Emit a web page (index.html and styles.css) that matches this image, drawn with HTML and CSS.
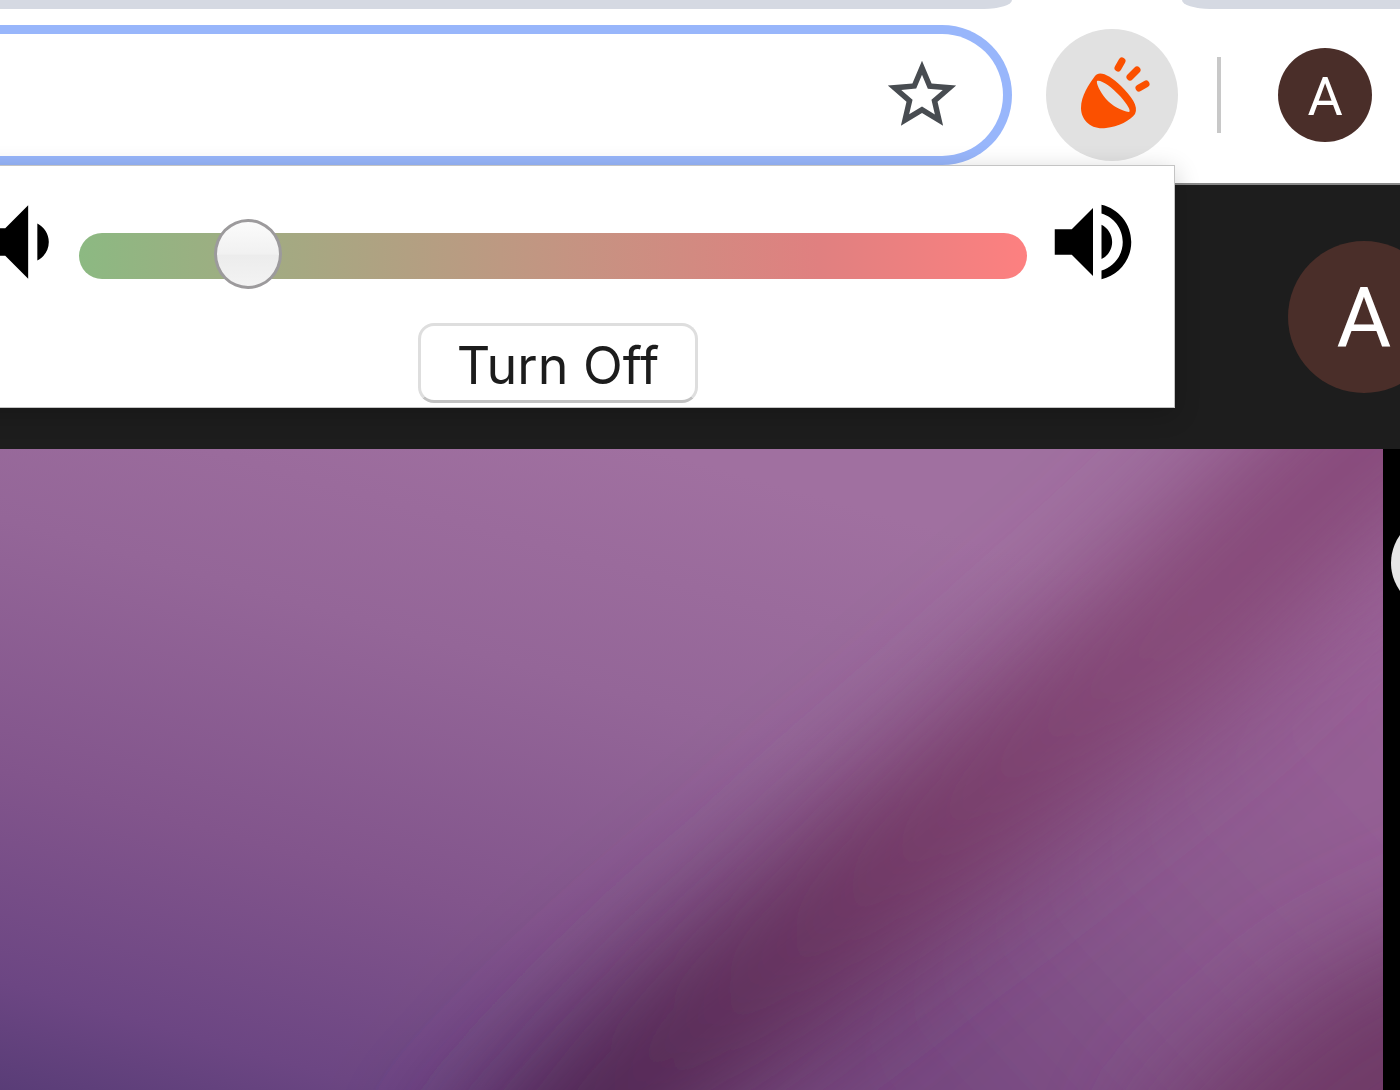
FILE: index.html
```html
<!DOCTYPE html>
<html lang="en">
<head>
    <meta charset="utf-8">
    <meta name="viewport" content="width=device-width, initial-scale=1.0">
    <title>Volume</title>
    <link rel="stylesheet" href="styles.css">
</head>
<body>
    <div class="tabs">
        <div class="tab tab-left"></div>
        <div class="tab tab-right"></div>
    </div>

    <div class="toolbar">
        <div class="address">
            <input class="address-input" type="text" aria-label="Address">
            <button class="star" aria-label="Bookmark">
                <svg viewBox="0 0 24 24"><path d="M22 9.24l-7.19-.62L12 2 9.19 8.63 2 9.24l5.46 4.73L5.82 21 12 17.27 18.18 21l-1.63-7.03L22 9.24zM12 15.4l-3.76 2.27 1-4.28-3.32-2.88 4.38-.38L12 6.1l1.71 4.04 4.38.38-3.32 2.88 1 4.28L12 15.4z"/></svg>
            </button>
        </div>
        <button class="extension" aria-label="Volume extension">
            <svg viewBox="0 0 132 132">
                <path fill-rule="evenodd" d="M49 47C53 41 64 46 75 57C85 67 93 77 89 85C85 91 72 98 60 99C45 101 35 91 35 79C35 67 43 55 49 47ZM51 52C54 50 65 57 74 67C82 76 85 82 83 83C76 82 66 77 60 70C54 63 50 54 51 52Z"/>
                <path class="rays" d="M76 32L72 39M91 41L84 48M100 55L93 59"/>
            </svg>
        </button>
        <span class="divider"></span>
        <button class="avatar">A</button>

        <div class="popup">
            <div class="volume">
                <svg class="low" viewBox="0 0 24 24"><path d="M18.5 12c0-1.77-1.02-3.29-2.5-4.03v8.05c1.48-.73 2.5-2.25 2.5-4.02zM5 9v6h4l5 5V4L9 9H5z"/></svg>
                <input class="slider" type="range" min="0" max="650" value="100" aria-label="Volume">
                <svg class="high" viewBox="0 0 24 24"><path d="M3 9v6h4l5 5V4L7 9H3zm13.5 3c0-1.77-1.02-3.29-2.5-4.03v8.05c1.48-.73 2.5-2.25 2.5-4.02zM14 3.23v2.06c2.89.86 5 3.54 5 6.71s-2.11 5.85-5 6.71v2.06c4.01-.91 7-4.49 7-8.77s-2.99-7.86-7-8.77z"/></svg>
            </div>
            <button class="turn-off">Turn Off</button>
        </div>
    </div>

    <div class="site-header">
        <button class="avatar avatar-big">A</button>
    </div>

    <div class="content">
        <svg class="art" viewBox="0 0 1383 640" preserveAspectRatio="none">
            <defs>
                <linearGradient id="base" gradientUnits="userSpaceOnUse" x1="440" y1="-60" x2="220" y2="720">
                    <stop offset="0" stop-color="#a070a0"/>
                    <stop offset=".3" stop-color="#946698"/>
                    <stop offset=".6" stop-color="#82558c"/>
                    <stop offset=".85" stop-color="#6c4683"/>
                    <stop offset="1" stop-color="#563b75"/>
                </linearGradient>
                <linearGradient id="right" gradientUnits="userSpaceOnUse" x1="1383" y1="200" x2="900" y2="640">
                    <stop offset="0" stop-color="#996197"/>
                    <stop offset=".5" stop-color="#8a598e"/>
                    <stop offset="1" stop-color="#74477f"/>
                </linearGradient>
                <linearGradient id="band" gradientUnits="userSpaceOnUse" x1="1383" y1="0" x2="590" y2="640">
                    <stop offset="0" stop-color="#87487a"/>
                    <stop offset=".3" stop-color="#854877"/>
                    <stop offset=".6" stop-color="#743a66"/>
                    <stop offset="1" stop-color="#502852"/>
                </linearGradient>
                <filter id="soft" filterUnits="userSpaceOnUse" x="-300" y="-300" width="2000" height="1300">
                    <feGaussianBlur stdDeviation="55"/>
                </filter>
            </defs>
            <rect width="1383" height="640" fill="url(#base)"/>
            <path d="M1600 20L1170 195L956 380L813 490L600 660L450 900H1600Z" fill="url(#right)" filter="url(#soft)"/>
            <path d="M1530 -120L1363 0L1165 190L1060 277L952 368L880 424L812 483L742 538L668 600L600 660L490 780" fill="none" stroke="url(#band)" stroke-width="170" filter="url(#soft)"/>
            <path d="M1600 400L1320 530L1160 670L1100 900H1600Z" fill="#703b67" filter="url(#soft)"/>
        </svg>
        <div class="side">
            <button class="side-button" aria-label="Next"></button>
        </div>
    </div>
</body>
</html>
```

FILE: styles.css
```css
* {
    box-sizing: border-box;
}
body {
    margin: 0;
    min-height: 100vh;
    display: flex;
    flex-direction: column;
    font-family: Roboto, sans-serif;
    background: #000;
    overflow: hidden;
}
button {
    padding: 0;
    border: 0;
    background: none;
    flex-shrink: 0;
}
svg {
    display: block;
    flex-shrink: 0;
}

/* browser bar */
.tabs {
    display: flex;
    gap: 170px;
    height: 9px;
    background: #fff;
}
.tab {
    background: #d5d9e2;
}
.tab-left {
    flex: 1;
    border-radius: 0 0 28px 0 / 0 0 9px 0;
}
.tab-right {
    width: 218px;
    border-radius: 0 0 0 28px / 0 0 0 9px;
}
.toolbar {
    position: relative;
    display: flex;
    align-items: center;
    height: 176px;
    padding: 0 28px 2px 0;
    background: #fff;
    border-bottom: 2px solid #8a8a8a;
}
.address {
    flex: 1;
    display: flex;
    align-items: center;
    height: 140px;
    padding-right: 40px;
    border: 9px solid #98b6fb;
    border-left: 0;
    border-radius: 0 70px 70px 0;
}
.address-input {
    flex: 1;
    min-width: 0;
    height: 100%;
    padding: 0 24px;
    border: 0;
    outline: 0;
    font-size: 52px;
    background: none;
}
.star svg {
    width: 82px;
    height: 82px;
    fill: #484c51;
}
.extension {
    margin-left: 34px;
    width: 132px;
    height: 132px;
    border-radius: 50%;
    background: #e1e1e1;
}
.extension svg {
    fill: #fb5000;
}
.rays {
    stroke: #fb5000;
    stroke-width: 7;
    stroke-linecap: round;
}
.divider {
    width: 4px;
    height: 76px;
    margin: 0 57px 0 39px;
    background: #c8c8c8;
}
.avatar {
    width: 94px;
    height: 94px;
    padding-top: 4px;
    border-radius: 50%;
    font-family: Roboto, sans-serif;
    font-size: 54px;
    line-height: 1;
    color: #fff;
    background: #4a2e29;
}

/* extension popup */
.popup {
    position: absolute;
    z-index: 1;
    top: 156px;
    left: -59px;
    right: 225px;
    padding: 21px 0 4px;
    display: flex;
    flex-direction: column;
    align-items: center;
    gap: 26px;
    background: #fff;
    border: 1px solid #c4c4c4;
    box-shadow: 0 6px 24px rgba(0, 0, 0, .2);
}
.volume {
    align-self: stretch;
    display: flex;
    align-items: center;
    padding: 0 30px 0 22px;
}
.low {
    width: 110px;
    height: 110px;
}
.high {
    width: 102px;
    height: 102px;
}
.slider {
    -webkit-appearance: none;
    appearance: none;
    flex: 1;
    min-width: 0;
    height: 46px;
    margin: 28px 15px 0 5px;
    border-radius: 23px;
    background: linear-gradient(to right, #8cb982, #c39582 50%, #e08080 78%, #fd8080);
}
.slider::-webkit-slider-runnable-track {
    height: 46px;
}
.slider::-webkit-slider-thumb {
    -webkit-appearance: none;
    width: 68px;
    height: 70px;
    margin-top: -14px;
    border: 3px solid #9c9a9c;
    border-radius: 50%;
    background: linear-gradient(#fbfbfb, #f1f1f1 50%, #ececec 52%, #f3f3f3);
}
.turn-off {
    width: 280px;
    height: 80px;
    padding-top: 6px;
    border: 3px solid #dedede;
    border-bottom-color: #c2c2c2;
    border-radius: 16px;
    font-family: Inter, sans-serif;
    font-size: 52px;
    line-height: 1;
    color: #1c1c1c;
    background: #fff;
}

/* page under the toolbar */
.site-header {
    display: flex;
    justify-content: flex-end;
    align-items: center;
    height: 264px;
    background: #1d1d1d;
}
.avatar-big {
    width: 152px;
    height: 152px;
    margin-right: -40px;
    font-size: 84px;
}
.content {
    flex: 1;
    display: flex;
    min-height: 0;
}
.art {
    flex: 1;
    min-width: 0;
    height: 641px;
}
.side {
    width: 17px;
    padding: 66px 0 0 8px;
    overflow: hidden;
    background: #000;
}
.side-button {
    width: 96px;
    height: 96px;
    border-radius: 50%;
    background: #e6e6e6;
}
```
